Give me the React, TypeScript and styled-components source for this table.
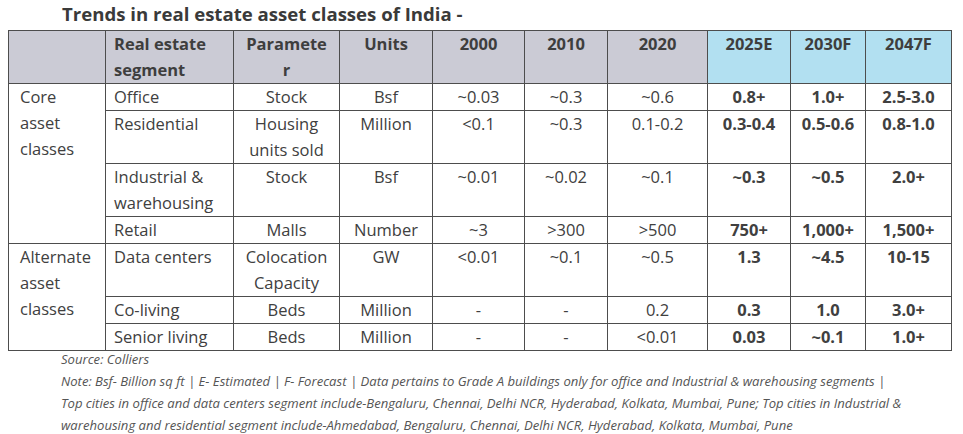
import React, { FC } from "react";
import styled, { createGlobalStyle } from "styled-components";

const GlobalStyle = createGlobalStyle`
  html, body {
    margin: 0;
    padding: 0;
    background: #ffffff;
  }
  body {
    font-family: "Open Sans", "Liberation Sans", sans-serif;
    color: #404040;
  }
`;

const Page = styled.div`
  width: 963px;
  height: 434px;
  padding: 0 8px;
  box-sizing: border-box;
  overflow: hidden;
`;

const Title = styled.h1`
  margin: 0;
  padding-left: 54px;
  height: 30px;
  font-size: 18.6px;
  line-height: 28px;
  font-weight: 700;
  color: #3a3a3a;
`;

const Table = styled.table`
  border-collapse: collapse;
  table-layout: fixed;
  width: 944px;
  font-size: 16.5px;
  line-height: 26px;
`;

const HeadCell = styled.th<{ tone: "gray" | "blue"; align?: "left" | "center"; inset?: number }>`
  border: 1px solid #4d4d4d;
  background: ${(p) => (p.tone === "blue" ? "#b2e0f1" : "#cbcbd5")};
  text-align: ${(p) => p.align || "center"};
  vertical-align: top;
  padding: 0 ${(p) => p.inset ?? 8}px;
  font-weight: 700;
  color: #3e3e3e;
  height: 50px;
  overflow-wrap: anywhere;
`;

const Cell = styled.td<{ align?: "left" | "center"; bold?: boolean }>`
  border: 1px solid #4d4d4d;
  text-align: ${(p) => p.align || "center"};
  vertical-align: top;
  padding: 0 8px;
  font-weight: ${(p) => (p.bold ? 700 : 400)};
  color: #404040;
`;

const GroupCell = styled(Cell)`
  padding: 0 14px 0 11px;
`;

const Notes = styled.div`
  margin-top: -3px;
  padding-left: 53px;
  font-size: 13.1px;
  line-height: 22px;
  font-style: italic;
  color: #555555;
  white-space: nowrap;
`;

interface Row {
  segment: string;
  parameter: string;
  units: string;
  values: string[];
  forecast: string[];
}

const core: Row[] = [
  { segment: "Office", parameter: "Stock", units: "Bsf", values: ["~0.03", "~0.3", "~0.6"], forecast: ["0.8+", "1.0+", "2.5-3.0"] },
  { segment: "Residential", parameter: "Housing units sold", units: "Million", values: ["<0.1", "~0.3", "0.1-0.2"], forecast: ["0.3-0.4", "0.5-0.6", "0.8-1.0"] },
  { segment: "Industrial & warehousing", parameter: "Stock", units: "Bsf", values: ["~0.01", "~0.02", "~0.1"], forecast: ["~0.3", "~0.5", "2.0+"] },
  { segment: "Retail", parameter: "Malls", units: "Number", values: ["~3", ">300", ">500"], forecast: ["750+", "1,000+", "1,500+"] },
];

const alternate: Row[] = [
  { segment: "Data centers", parameter: "Colocation Capacity", units: "GW", values: ["<0.01", "~0.1", "~0.5"], forecast: ["1.3", "~4.5", "10-15"] },
  { segment: "Co-living", parameter: "Beds", units: "Million", values: ["-", "-", "0.2"], forecast: ["0.3", "1.0", "3.0+"] },
  { segment: "Senior living", parameter: "Beds", units: "Million", values: ["-", "-", "<0.01"], forecast: ["0.03", "~0.1", "1.0+"] },
];

const widths = [97, 128, 106, 93, 92, 83, 100, 83, 75, 86];

const Group: FC<{ label: string; rows: Row[] }> = ({ label, rows }) => (
  <>
    {rows.map((r, i) => (
      <tr key={r.segment}>
        {i === 0 && (
          <GroupCell align="left" rowSpan={rows.length}>
            {label}
          </GroupCell>
        )}
        <Cell align="left">{r.segment}</Cell>
        <Cell>{r.parameter}</Cell>
        <Cell>{r.units}</Cell>
        {r.values.map((v, j) => (
          <Cell key={"v" + j}>{v}</Cell>
        ))}
        {r.forecast.map((v, j) => (
          <Cell key={"f" + j} bold>
            {v}
          </Cell>
        ))}
      </tr>
    ))}
  </>
);

const App: FC = () => (
  <Page>
    <GlobalStyle />
    <Title>Trends in real estate asset classes of India -</Title>
    <Table>
      <colgroup>
        {widths.map((w, i) => (
          <col key={i} style={{ width: w }} />
        ))}
      </colgroup>
      <thead>
        <tr>
          <HeadCell tone="gray" />
          <HeadCell tone="gray" align="left">
            Real estate segment
          </HeadCell>
          <HeadCell tone="gray" inset={11}>
            Parameter
          </HeadCell>
          <HeadCell tone="gray">Units</HeadCell>
          <HeadCell tone="gray">2000</HeadCell>
          <HeadCell tone="gray">2010</HeadCell>
          <HeadCell tone="gray">2020</HeadCell>
          <HeadCell tone="blue">2025E</HeadCell>
          <HeadCell tone="blue">2030F</HeadCell>
          <HeadCell tone="blue">2047F</HeadCell>
        </tr>
      </thead>
      <tbody>
        <Group label="Core asset classes" rows={core} />
        <Group label="Alternate asset classes" rows={alternate} />
      </tbody>
    </Table>
    <Notes>
      <div>Source: Colliers</div>
      <div>
        Note: Bsf- Billion sq ft | E- Estimated | F- Forecast | Data pertains to Grade A buildings only for office and
        Industrial &amp; warehousing segments |
      </div>
      <div>
        Top cities in office and data centers segment include-Bengaluru, Chennai, Delhi NCR, Hyderabad, Kolkata, Mumbai,
        Pune; Top cities in Industrial &amp;
      </div>
      <div>
        warehousing and residential segment include-Ahmedabad, Bengaluru, Chennai, Delhi NCR, Hyderabad, Kolkata,
        Mumbai, Pune
      </div>
    </Notes>
  </Page>
);

export default App;
